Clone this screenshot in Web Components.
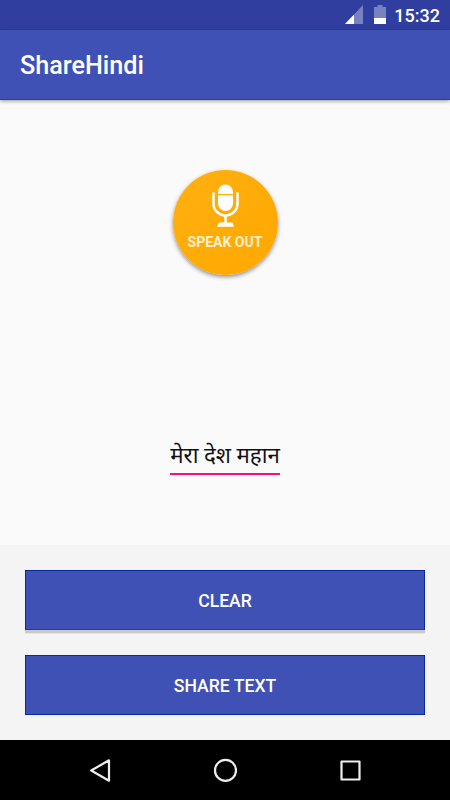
<!DOCTYPE html>
<html lang="en">
<head>
<meta charset="utf-8">
<title>ShareHindi</title>
<style>
    body {
        margin: 0;
        font-family: Roboto, "Liberation Sans", sans-serif;
    }
</style>
</head>
<body>
<share-app>
    <status-bar slot="status">15:32</status-bar>
    <app-bar slot="bar">ShareHindi</app-bar>
    <speak-button>SPEAK OUT</speak-button>
    <text-field>मेरा देश महान</text-field>
    <flat-button slot="actions" raised>CLEAR</flat-button>
    <flat-button slot="actions">SHARE TEXT</flat-button>
    <nav-bar slot="nav"></nav-bar>
</share-app>

<script>
// small helper so each element only has to give its markup
function define(name, html) {
    const template = document.createElement("template");
    template.innerHTML = html;
    window.customElements.define(name, class extends HTMLElement {
        constructor() {
            super();
            this.attachShadow({ mode: "open" });
            this.shadowRoot.appendChild(template.content.cloneNode(true));
        }
    });
}

define("share-app", `
    <style>
        :host {
            display: flex;
            flex-direction: column;
            width: 450px;
            height: 800px;
            overflow: hidden;
            background: #fafafa;
        }
        main {
            flex: 1;
            display: flex;
            flex-direction: column;
            align-items: center;
            justify-content: space-between;
            padding: 70px 0;
        }
        footer {
            display: flex;
            flex-direction: column;
            gap: 25px;
            padding: 25px;
            background: #f4f4f4;
        }
    </style>
    <slot name="status"></slot>
    <slot name="bar"></slot>
    <main><slot></slot></main>
    <footer><slot name="actions"></slot></footer>
    <slot name="nav"></slot>
`);

define("status-bar", `
    <style>
        :host {
            display: flex;
            justify-content: flex-end;
            align-items: center;
            height: 30px;
            box-sizing: border-box;
            padding-right: 10px;
            background: #303f9f;
            color: #fff;
            font-size: 18px;
            font-weight: 500;
            line-height: 30px;
        }
        .signal { margin-right: 11px; }
        .battery { margin-right: 8px; }
        svg { margin-bottom: 1px; }
        span { padding-top: 1px; }
    </style>
    <svg class="signal" width="18" height="19">
        <path d="M18 0V19H0z" fill="#fff" fill-opacity=".35"/>
        <path d="M9 9.5V19H0z" fill="#fff"/>
    </svg>
    <svg class="battery" width="12" height="19">
        <path d="M3.5 0h5v2H12v17H0V2h3.5z" fill="#fff" fill-opacity=".35"/>
        <path d="M0 13h12v6H0z" fill="#fff"/>
    </svg>
    <span><slot></slot></span>
`);

define("app-bar", `
    <style>
        :host {
            display: flex;
            align-items: center;
            height: 70px;
            box-sizing: border-box;
            padding: 1px 20px 0;
            border-bottom: 1px solid #213db0;
            background: #3f51b5;
            color: #fff;
            font-size: 25.2px;
            font-weight: 500;
            box-shadow: 0 1px 4px rgba(0, 0, 0, .4);
        }
    </style>
    <span><slot></slot></span>
`);

define("speak-button", `
    <style>
        :host {
            display: flex;
            flex-direction: column;
            align-items: center;
            width: 105px;
            height: 105px;
            box-sizing: border-box;
            padding-top: 14px;
            border-radius: 50%;
            background: linear-gradient(135deg, #ffb011, #ffa800);
            box-shadow: 0 2px 4px rgba(0, 0, 0, .42);
            color: #fff0d0;
            font-size: 14px;
            font-weight: 700;
            line-height: 16px;
        }
        span { margin-top: 7px; }
    </style>
    <svg width="28" height="43" viewBox="-.5 0 28 43">
        <path d="M6.5 10V8a7.500 7.500 0 0 1 15 0v2z" fill="#fff"/>
        <path d="M6.500 11.200h15v8.300a7.500 7.500 0 0 1-15 0z" fill="#fff"/>
        <path d="M2 8.500V19.400a12 12 0 0 0 24 0V8.500M14 31.500V39" fill="none" stroke="#fff" stroke-width="2.500"/>
        <path d="M7.500 38.600h13.500l1.500 4.200h-17z" fill="#fff"/>
    </svg>
    <span><slot></slot></span>
`);

define("text-field", `
    <style>
        :host {
            display: block;
            width: 110px;
            height: 36px;
            box-sizing: border-box;
            border-bottom: 2px solid #ff0f73;
            color: #111;
            font-family: Roboto, "Noto Sans", "Noto Sans Devanagari", sans-serif;
            font-size: 22.3px;
            line-height: 33px;
            text-align: center;
            white-space: nowrap;
        }
    </style>
    <slot></slot>
`);

define("flat-button", `
    <style>
        :host {
            display: flex;
            align-items: center;
            justify-content: center;
            height: 60px;
            box-sizing: border-box;
            padding-top: 1px;
            border: 1px solid #0429a8;
            background: #3f51b5;
            color: #fff;
            font-size: 17.6px;
            font-weight: 500;
        }
        :host([raised]) {
            border-bottom-color: #213da8;
            box-shadow: 0 3px 0 #c9c9c9, 0 4px 0 #e6e6e6;
        }
    </style>
    <span><slot></slot></span>
`);

define("nav-bar", `
    <style>
        :host {
            display: flex;
            align-items: center;
            justify-content: center;
            gap: 101px;
            height: 60px;
            background: #000;
        }
        svg {
            fill: none;
            stroke: #eee;
            stroke-width: 2.2;
            stroke-linejoin: round;
        }
    </style>
    <svg width="24" height="24"><path d="M3.200 12.500L21 2.300V22.700z"/></svg>
    <svg width="24" height="24"><circle cx="12.500" cy="12.400" r="10.500"/></svg>
    <svg width="24" height="24"><path d="M3.500 3.500h18v18h-18z"/></svg>
`);
</script>
</body>
</html>
